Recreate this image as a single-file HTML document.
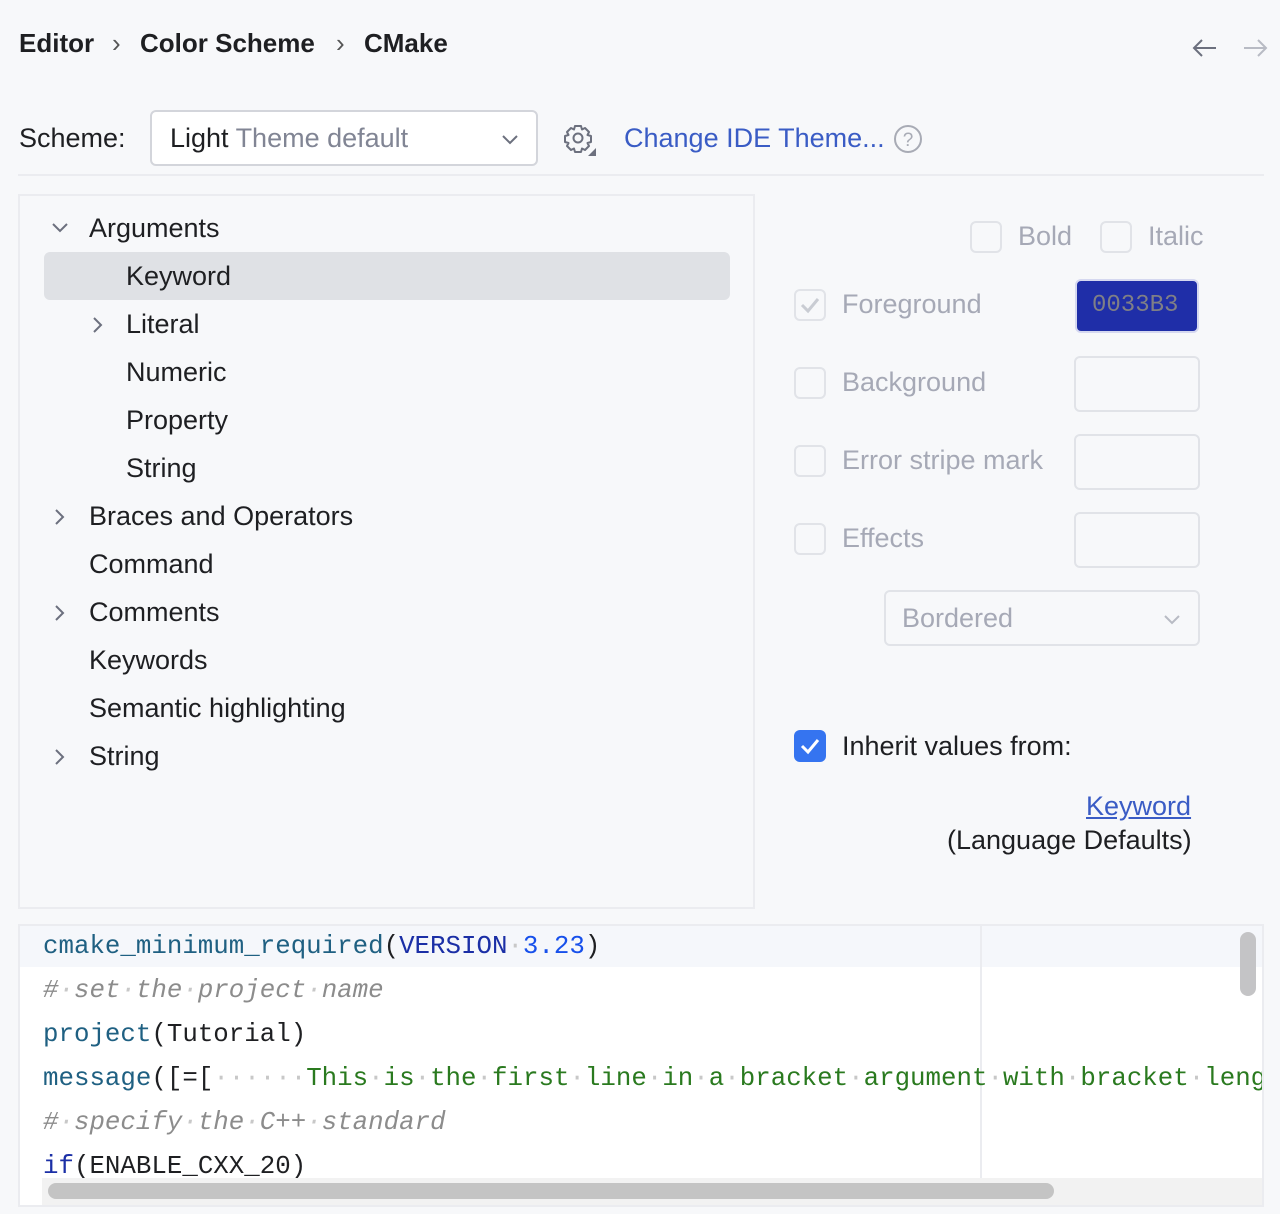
<!DOCTYPE html>
<html><head><meta charset="utf-8"><style>
*{margin:0;padding:0;box-sizing:border-box}
body{width:1280px;height:1214px;background:#f7f8fa;font-family:"Liberation Sans",sans-serif;color:#1e1f22;position:relative;overflow:hidden;font-size:27px}
.a{position:absolute;white-space:nowrap}
.b{font-weight:bold;font-size:26px}
.t{line-height:48px;height:48px;margin-top:-1px}
.g{color:#a6a9b6}
.cb{position:absolute;width:32px;height:32px;border:2px solid #e1e3e8;border-radius:6px;background:#f7f8fa}
.sw{position:absolute;width:126px;height:56px;border:2px solid #e1e3e8;border-radius:6px;background:#f7f8fa}
.mono{font-family:"Liberation Mono",monospace;font-size:25.8px;line-height:44px;height:44px;margin-top:-1px}
.fn{color:#1f6082}.cm{color:#8c8c8c;font-style:italic}.st{color:#2a7a1f}.kw{color:#1b2fa6}.nm{color:#1750eb}.d{color:#c8c8c8}
</style></head><body>
<div class="a b" style="left:19px;top:28px">Editor</div>
<div class="a" style="left:112px;top:28px;color:#555;font-size:26px">›</div>
<div class="a b" style="left:140px;top:28px">Color Scheme</div>
<div class="a" style="left:336px;top:28px;color:#555;font-size:26px">›</div>
<div class="a b" style="left:364px;top:28px">CMake</div>
<svg class="a" style="left:1190px;top:36px" width="80" height="24"><path d="M26 12H4M12 4L4 12L12 20" stroke="#6c707e" stroke-width="2" fill="none"/><path d="M54 12H76M68 4L76 12L68 20" stroke="#b8bbc4" stroke-width="2" fill="none"/></svg>

<div class="a" style="left:19px;top:123px">Scheme:</div>
<div class="a" style="left:150px;top:110px;width:388px;height:56px;border:2px solid #d3d5db;border-radius:6px;background:#fff"></div>
<div class="a" style="left:170px;top:123px">Light <span style="color:#818594">Theme default</span></div>
<svg class="a" style="left:500px;top:132px" width="20" height="14"><path d="M3 4L10 11L17 4" stroke="#6c707e" stroke-width="2" fill="none"/></svg>
<svg class="a" style="left:562px;top:122px" width="36" height="36"><circle cx="16" cy="16" r="4.5" stroke="#6c707e" stroke-width="2" fill="none"/><path d="M13 4h6l1 3.5 3-1.5 4 4-1.5 3 3.5 1v6l-3.5 1 1.5 3-4 4-3-1.5-1 3.5h-6l-1-3.5-3 1.5-4-4 1.5-3-3.5-1v-6l3.5-1-1.5-3 4-4 3 1.5z" stroke="#6c707e" stroke-width="2" fill="none" stroke-linejoin="round"/><path d="M34 26v8h-8z" fill="#6c707e"/></svg>
<div class="a" style="left:624px;top:123px;color:#3a5cc5">Change IDE Theme...</div>
<svg class="a" style="left:893px;top:124px" width="30" height="30"><circle cx="15" cy="15" r="13" stroke="#a8abb5" stroke-width="2" fill="none"/><text x="15" y="22" text-anchor="middle" font-size="19" fill="#a8abb5" font-family="Liberation Sans">?</text></svg>
<div class="a" style="left:18px;top:174px;width:1246px;height:2px;background:#ebecf0"></div>

<div class="a" style="left:18px;top:194px;width:737px;height:715px;border:2px solid #ebecf0"></div>
<div class="a" style="left:44px;top:252px;width:686px;height:48px;background:#dfe1e5;border-radius:6px"></div>
<svg class="a" style="left:50px;top:220px" width="20" height="16"><path d="M3 4L10 11L17 4" stroke="#6c707e" stroke-width="2" fill="none"/></svg>
<div class="a t" style="left:89px;top:205px">Arguments</div>
<div class="a t" style="left:126px;top:253px">Keyword</div>
<svg class="a" style="left:90px;top:315px" width="16" height="20"><path d="M4 3L11 10L4 17" stroke="#6c707e" stroke-width="2" fill="none"/></svg>
<div class="a t" style="left:126px;top:301px">Literal</div>
<div class="a t" style="left:126px;top:349px">Numeric</div>
<div class="a t" style="left:126px;top:397px">Property</div>
<div class="a t" style="left:126px;top:445px">String</div>
<svg class="a" style="left:52px;top:507px" width="16" height="20"><path d="M4 3L11 10L4 17" stroke="#6c707e" stroke-width="2" fill="none"/></svg>
<div class="a t" style="left:89px;top:493px">Braces and Operators</div>
<div class="a t" style="left:89px;top:541px">Command</div>
<svg class="a" style="left:52px;top:603px" width="16" height="20"><path d="M4 3L11 10L4 17" stroke="#6c707e" stroke-width="2" fill="none"/></svg>
<div class="a t" style="left:89px;top:589px">Comments</div>
<div class="a t" style="left:89px;top:637px">Keywords</div>
<div class="a t" style="left:89px;top:685px">Semantic highlighting</div>
<svg class="a" style="left:52px;top:747px" width="16" height="20"><path d="M4 3L11 10L4 17" stroke="#6c707e" stroke-width="2" fill="none"/></svg>
<div class="a t" style="left:89px;top:733px">String</div>

<div class="cb" style="left:970px;top:221px"></div><div class="a g" style="left:1018px;top:221px">Bold</div>
<div class="cb" style="left:1100px;top:221px"></div><div class="a g" style="left:1148px;top:221px">Italic</div>
<div class="cb" style="left:794px;top:289px"></div>
<svg class="a" style="left:798px;top:293px" width="24" height="24"><path d="M4 12L10 18L20 6" stroke="#c9ccd3" stroke-width="3" fill="none"/></svg>
<div class="a g" style="left:842px;top:289px">Foreground</div>
<div class="a" style="left:1075px;top:279px;width:124px;height:54px;background:#1f2ea8;border:2px solid #d5d8f0;border-radius:6px"></div>
<div class="a" style="left:1092px;top:292px;font-family:'Liberation Mono',monospace;font-size:24px;color:#7f7f86">0033B3</div>
<div class="cb" style="left:794px;top:367px"></div><div class="a g" style="left:842px;top:367px">Background</div>
<div class="sw" style="left:1074px;top:356px"></div>
<div class="cb" style="left:794px;top:445px"></div><div class="a g" style="left:842px;top:445px">Error stripe mark</div>
<div class="sw" style="left:1074px;top:434px"></div>
<div class="cb" style="left:794px;top:523px"></div><div class="a g" style="left:842px;top:523px">Effects</div>
<div class="sw" style="left:1074px;top:512px"></div>
<div class="a" style="left:884px;top:590px;width:316px;height:56px;border:2px solid #e1e3e8;border-radius:6px"></div>
<div class="a g" style="left:902px;top:603px">Bordered</div>
<svg class="a" style="left:1162px;top:612px" width="20" height="14"><path d="M3 4L10 11L17 4" stroke="#b8bbc4" stroke-width="2" fill="none"/></svg>
<div class="a" style="left:794px;top:730px;width:32px;height:32px;background:#3574f0;border-radius:6px"></div>
<svg class="a" style="left:798px;top:734px" width="24" height="24"><path d="M4 12L10 18L20 6" stroke="#fff" stroke-width="3" fill="none"/></svg>
<div class="a" style="left:842px;top:731px">Inherit values from:</div>
<div class="a" style="left:1086px;top:791px;color:#3a5cc5;text-decoration:underline">Keyword</div>
<div class="a" style="left:947px;top:825px">(Language Defaults)</div>

<div class="a" style="left:18px;top:924px;width:1246px;height:283px;border:2px solid #ebecf0;background:#fff;overflow:hidden">
 <div class="a" style="left:0;top:0;width:1244px;height:41px;background:#f5f7fb"></div>
 <div class="a" style="left:960px;top:0;width:2px;height:260px;background:#ebecf0"></div>
 <div class="a mono" style="left:23px;top:0"><span class="fn">cmake_minimum_required</span>(<span class="kw">VERSION</span><span class="d">·</span><span class="nm">3.23</span>)</div>
 <div class="a mono cm" style="left:23px;top:44px">#<span class="d">·</span>set<span class="d">·</span>the<span class="d">·</span>project<span class="d">·</span>name</div>
 <div class="a mono" style="left:23px;top:88px"><span class="fn">project</span>(Tutorial)</div>
 <div class="a mono" style="left:23px;top:132px"><span class="fn">message</span>([=[<span class="d">······</span><span class="st">This<span class="d">·</span>is<span class="d">·</span>the<span class="d">·</span>first<span class="d">·</span>line<span class="d">·</span>in<span class="d">·</span>a<span class="d">·</span>bracket<span class="d">·</span>argument<span class="d">·</span>with<span class="d">·</span>bracket<span class="d">·</span>length</span></div>
 <div class="a mono cm" style="left:23px;top:176px">#<span class="d">·</span>specify<span class="d">·</span>the<span class="d">·</span>C++<span class="d">·</span>standard</div>
 <div class="a mono" style="left:23px;top:220px"><span class="kw">if</span>(ENABLE_CXX_20)</div>
 <div class="a" style="left:22px;top:252px;width:1222px;height:29px;background:#f2f2f2"></div>
 <div class="a" style="left:28px;top:257px;width:1006px;height:16px;background:#c4c4c4;border-radius:8px"></div>
 <div class="a" style="left:1220px;top:6px;width:16px;height:64px;background:#c4c4c6;border-radius:8px"></div>
</div>
</body></html>
